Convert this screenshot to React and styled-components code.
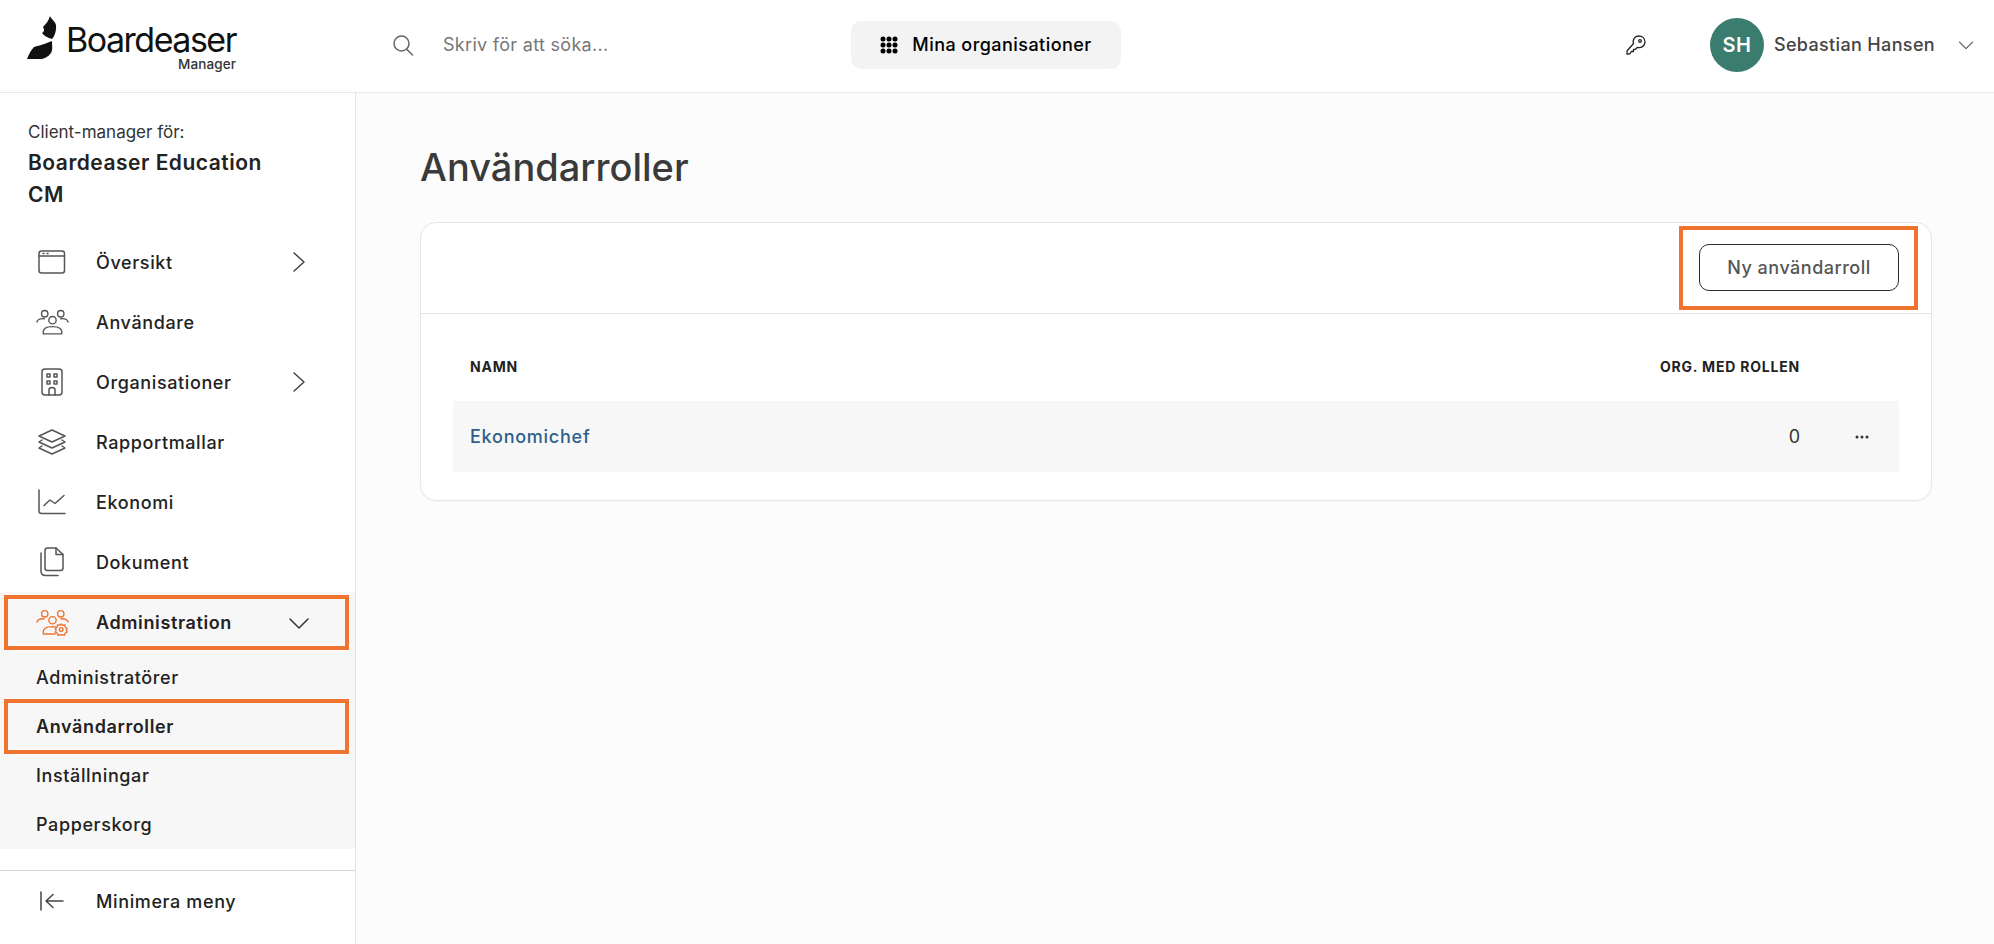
import React from 'react'
import styled, { createGlobalStyle } from 'styled-components'

const Global = createGlobalStyle`
  html, body { margin: 0; padding: 0; background: #fff; }
  body { font-family: Inter, "Liberation Sans", sans-serif; color: #222; }
  * { box-sizing: border-box; }
`

const Page = styled.div`
  width: 1994px;
  height: 944px;
  overflow: hidden;
  display: flex;
  flex-direction: column;
`

const Header = styled.header`
  height: 93px;
  flex: none;
  display: flex;
  align-items: center;
  background: #fff;
  padding-bottom: 3px;
  border-bottom: 1px solid #e9e9e9;
`

const LogoArea = styled.div`
  width: 392px;
  height: 100%;
  flex: none;
  padding: 16px 0 0 27px;
  display: flex;
  align-items: flex-start;
  gap: 9px;
`

const LogoText = styled.div`
  display: flex;
  flex-direction: column;
  align-items: flex-end;
  width: 170px;
  margin-top: 7px;
  font-size: 34px;
  line-height: 34px;
  letter-spacing: -1.5px;
  color: #111;
`

const LogoSub = styled.span`
  font-size: 13.5px;
  line-height: 14px;
  letter-spacing: 0.1px;
  font-weight: 500;
  color: #333;
`

const SearchArea = styled.div`
  width: 459px;
  flex: none;
  display: flex;
  align-items: center;
  gap: 29px;
  font-size: 18px;
  letter-spacing: 0.3px;
  color: #777;
`

const OrgButton = styled.button`
  width: 270px;
  height: 48px;
  flex: none;
  display: flex;
  align-items: center;
  justify-content: center;
  gap: 14px;
  border: 0;
  border-radius: 10px;
  background: #f3f3f3;
  font: 500 18px Inter, sans-serif;
  letter-spacing: 0.45px;
  color: #000;
`

const HeaderRight = styled.div`
  margin-left: auto;
  display: flex;
  align-items: center;
  padding-right: 20px;
`

const KeyWrap = styled.div`
  display: flex;
  margin-right: 64px;
`

const Avatar = styled.div`
  width: 54px;
  height: 54px;
  border-radius: 50%;
  background: #3a7c6e;
  color: #fff;
  display: flex;
  align-items: center;
  justify-content: center;
  font-size: 20px;
  font-weight: 600;
  letter-spacing: 0.5px;
  margin-right: 10px;
`

const UserName = styled.div`
  font-size: 18px;
  font-weight: 500;
  color: #444;
  letter-spacing: 0.35px;
  margin-right: 23px;
`

const Body = styled.div`
  flex: 1;
  display: flex;
  min-height: 0;
`

const Sidebar = styled.aside`
  width: 356px;
  flex: none;
  display: flex;
  flex-direction: column;
  background: #fff;
  border-right: 1px solid #e4e4e4;
`

const ClientBlock = styled.div`
  height: 139px;
  flex: none;
  padding: 28px 28px 0;
`

const ClientLabel = styled.div`
  font-size: 17px;
  line-height: 22px;
  color: #333;
  margin-bottom: 4px;
`

const ClientName = styled.div`
  font-size: 21px;
  line-height: 32px;
  font-weight: 600;
  color: #222;
  letter-spacing: 0.5px;
  width: 270px;
`

const NavRow = styled.div`
  position: relative;
  height: ${p => p.$h || 60}px;
  display: flex;
  align-items: center;
  padding-left: 96px;
  font-size: 18px;
  font-weight: ${p => (p.$bold ? 600 : 450)};
  color: #222;
  letter-spacing: 0.62px;
`

const NavIcon = styled.span`
  position: absolute;
  left: 32px;
  top: 50%;
  transform: translateY(-50%);
  width: 40px;
  height: 40px;
  display: flex;
  align-items: center;
  justify-content: center;
`

const Chevron = styled.span`
  position: absolute;
  left: 288px;
  top: 50%;
  transform: translateY(-50%);
  width: 22px;
  height: 22px;
  display: flex;
`

const Highlight = styled.span`
  position: absolute;
  border: 4px solid #ee7430;
  pointer-events: none;
  left: ${p => p.$l}px;
  right: ${p => p.$r}px;
  top: ${p => p.$t}px;
  bottom: ${p => p.$b}px;
`

const SubNav = styled.div`
  background: #f7f7f7;
  height: 257px;
  flex: none;
`

const SubItem = styled.div`
  position: relative;
  height: 49px;
  display: flex;
  align-items: center;
  padding-left: 36px;
  font-size: 18px;
  font-weight: ${p => (p.$bold ? 600 : 450)};
  color: #222;
  letter-spacing: 0.62px;
`

const SideFooter = styled.div`
  margin-top: 21px;
  border-top: 1px solid #d6d6d6;
`

const Main = styled.main`
  flex: 1;
  background: #fcfcfc;
  padding: 51px 62px 0 64px;
`

const Title = styled.h1`
  margin: 0 0 32px;
  font-size: 38px;
  line-height: 46px;
  font-weight: 500;
  color: #3a3a3a;
`

const Card = styled.section`
  height: 279px;
  background: #fff;
  border: 1px solid #e6e6e6;
  border-radius: 16px;
  box-shadow: 0 1px 2px rgba(0, 0, 0, 0.03);
`

const CardTop = styled.div`
  height: 91px;
  display: flex;
  align-items: center;
  justify-content: flex-end;
  padding: 0 32px 1px 0;
  border-bottom: 1px solid #e6e6e6;
`

const ButtonWrap = styled.div`
  position: relative;
`

const NewButton = styled.button`
  width: 200px;
  height: 47px;
  display: block;
  border: 1px solid #2b2b2b;
  border-radius: 10px;
  background: #fff;
  font: 500 18px Inter, sans-serif;
  color: #555;
  letter-spacing: 0.5px;
`

const TableWrap = styled.div`
  padding: 0 32px;
`

const TableHead = styled.div`
  height: 87px;
  display: flex;
  align-items: center;
  justify-content: space-between;
  padding: 18px 99px 0 17px;
  font-size: 14px;
  font-weight: 700;
  color: #222;
  letter-spacing: 0.8px;
`

const TableRow = styled.div`
  height: 71px;
  display: flex;
  align-items: center;
  background: #f7f7f7;
  padding-left: 17px;
  font-size: 18px;
`

const RoleLink = styled.a`
  color: #2d5f8d;
  font-weight: 500;
  letter-spacing: 0.75px;
  flex: 1;
`

const Count = styled.span`
  color: #333;
`

const More = styled.span`
  display: flex;
  margin: 0 30px 0 55px;
`

const stroke = { fill: 'none', stroke: '#555', strokeWidth: 1.5, strokeLinecap: 'round', strokeLinejoin: 'round' }
const orange = { ...stroke, stroke: '#ee7430' }

const LogoMark = () => (
  <svg width="30" height="44" viewBox="27 16 30 44">
    <path fill="#111" d="M50 16C51 19 55 21 56 25C56.500 30 55 36 52 39C48 38 44 36 42 33C45 31 44 29 43 27C46 24 49 20 50 16Z" />
    <path fill="#111" d="M52 41C52 46 53 50 51 53C48 57 44 59 40 59L27 59C29 54 31 50 34 47C38 46 45 44 52 41Z" />
  </svg>
)

const SearchIcon = () => (
  <svg width="22" height="22" viewBox="0 0 22 22" {...stroke} stroke="#666">
    <circle cx="9.500" cy="9.500" r="7.500" />
    <path d="M15 15.500L20.500 21" />
  </svg>
)

const GridIcon = () => (
  <svg width="18" height="18" viewBox="0 0 18 18" fill="#000">
    {[3, 9, 15].flatMap(y => [3, 9, 15].map(x => <circle key={`${x}-${y}`} cx={x} cy={y} r="2.500" />))}
  </svg>
)

const KeyIcon = () => (
  <svg width="20" height="20" viewBox="0 0 20 20" {...stroke} stroke="#222" strokeWidth="1.3">
    <path d="M7.500 8.500C6.300 5 8.700 1 12.500 1C16.500 1 19 3.600 19 7C19 11 15 13.500 11.500 12.300L9.500 14.300L7.500 14.300L7.500 16.500L5.300 16.500L3.800 18.800L1 19L1 16Z" />
    <circle cx="14" cy="6" r="1.300" />
  </svg>
)

const WindowIcon = () => (
  <svg width="28" height="26" viewBox="0 0 28 26" {...stroke}>
    <rect x="1" y="2" width="25.500" height="22" rx="2.500" />
    <path d="M1 7H26.500M5 4.500H6M9 4.500H10" />
  </svg>
)

const UsersIcon = () => (
  <svg width="33" height="28" viewBox="0 0 36 30" {...stroke}>
    <circle cx="9.500" cy="6" r="3.500" />
    <circle cx="27" cy="6" r="3.500" />
    <circle cx="18" cy="13" r="4" />
    <path d="M1 15C2 12 5 11 9 11.500M35 15C34 12 31 11 27 11.500" />
    <path d="M8 28C7 22 11 20 18 20C25 20 29 22 28 28Z" />
  </svg>
)

const BuildingIcon = () => (
  <svg width="22" height="28" viewBox="0 0 22 28" {...stroke}>
    <rect x="1" y="1" width="20" height="26" rx="3" />
    <rect x="6" y="6" width="3" height="3" />
    <rect x="13" y="6" width="3" height="3" />
    <rect x="6" y="13" width="3" height="3" />
    <rect x="13" y="13" width="3" height="3" />
    <path d="M8 27V22C8 20 9.500 19.500 11 19.500C12.500 19.500 14 20 14 22V27" />
  </svg>
)

const LayersIcon = () => (
  <svg width="28" height="28" viewBox="0 0 28 28" {...stroke}>
    <path d="M14 2L27 8L14 14L1 8Z" />
    <path d="M4 12L1 14L14 20L27 14L24 12" />
    <path d="M4 18L1 20L14 26L27 20L24 18" />
  </svg>
)

const ChartIcon = () => (
  <svg width="28" height="26" viewBox="0 0 28 26" {...stroke}>
    <path d="M1 1V22C1 23.500 2 24.500 3.500 24.500H27" />
    <path d="M6 16.500L12 11L17 14.500L26 6.500" />
  </svg>
)

const DocsIcon = () => (
  <svg width="26" height="30" viewBox="0 0 26 30" {...stroke}>
    <path d="M6 3.500C6 2 7 1 8.500 1H17L24 7.500V21C24 22.500 23 23.500 21.500 23.500H8.500C7 23.500 6 22.500 6 21Z" />
    <path d="M17 1V7.500H24" />
    <path d="M2 6V24C2 27 3.500 28.500 6.500 28.500H19" />
  </svg>
)

const AdminIcon = () => (
  <svg width="33" height="28" viewBox="0 0 36 30" {...orange}>
    <circle cx="9.500" cy="5" r="3.500" />
    <circle cx="27" cy="5" r="3.500" />
    <circle cx="18" cy="12" r="4" />
    <path d="M1 14C2 11 5 10 9 10.500M35 14C34 11 31 10 27 10.500" />
    <path d="M8 27C7 21 11 19 18 19L21 19.300M8 27H21" />
    <circle cx="27.500" cy="22" r="2" />
    <path d="M27.500 16L29 17.500L31.500 17L32 19.500L34 21L33 23L34 25L31.800 26L31 28.500L28.500 27.800H26.500L24 28.500L23.200 26L21 25L22 23L21 21L23 19.500L23.500 17L26 17.500Z" />
  </svg>
)

const CollapseIcon = () => (
  <svg width="24" height="20" viewBox="0 0 24 20" {...stroke} stroke="#444">
    <path d="M1 1V19M23 10H7M13 3.500L6 10L13 16.500" />
  </svg>
)

const ChevronRight = () => (
  <svg width="22" height="22" viewBox="0 0 22 22" {...stroke} stroke="#444">
    <path d="M6 2L16 11L6 20" />
  </svg>
)

const ChevronDown = ({ color = '#333', size = 22 }) => (
  <svg width={size} height={size} viewBox="0 0 22 22" {...stroke} stroke={color}>
    <path d="M2 7L11 16L20 7" />
  </svg>
)

const Dots = () => (
  <svg width="14" height="4" viewBox="0 0 14 4" fill="#333">
    <circle cx="2" cy="2" r="1.500" />
    <circle cx="7" cy="2" r="1.500" />
    <circle cx="12" cy="2" r="1.500" />
  </svg>
)

const navItems = [
  { label: 'Översikt', icon: <WindowIcon />, arrow: true },
  { label: 'Användare', icon: <UsersIcon /> },
  { label: 'Organisationer', icon: <BuildingIcon />, arrow: true },
  { label: 'Rapportmallar', icon: <LayersIcon /> },
  { label: 'Ekonomi', icon: <ChartIcon /> },
  { label: 'Dokument', icon: <DocsIcon /> },
]

export default function App() {
  return (
    <Page>
      <Global />
      <Header>
        <LogoArea>
          <LogoMark />
          <LogoText>
            Boardeaser
            <LogoSub>Manager</LogoSub>
          </LogoText>
        </LogoArea>
        <SearchArea>
          <SearchIcon />
          Skriv för att söka...
        </SearchArea>
        <OrgButton>
          <GridIcon />
          Mina organisationer
        </OrgButton>
        <HeaderRight>
          <KeyWrap><KeyIcon /></KeyWrap>
          <Avatar>SH</Avatar>
          <UserName>Sebastian Hansen</UserName>
          <ChevronDown color="#555" size={16} />
        </HeaderRight>
      </Header>
      <Body>
        <Sidebar>
          <ClientBlock>
            <ClientLabel>Client-manager för:</ClientLabel>
            <ClientName>Boardeaser Education CM</ClientName>
          </ClientBlock>
          {navItems.map(item => (
            <NavRow key={item.label}>
              <NavIcon>{item.icon}</NavIcon>
              {item.label}
              {item.arrow && <Chevron><ChevronRight /></Chevron>}
            </NavRow>
          ))}
          <SubNav>
            <NavRow $h={61} $bold>
              <NavIcon><AdminIcon /></NavIcon>
              Administration
              <Chevron><ChevronDown /></Chevron>
              <Highlight $l={4} $r={6} $t={3} $b={3} />
            </NavRow>
            <SubItem>Administratörer</SubItem>
            <SubItem $bold>
              Användarroller
              <Highlight $l={4} $r={6} $t={-3} $b={-3} />
            </SubItem>
            <SubItem>Inställningar</SubItem>
            <SubItem>Papperskorg</SubItem>
          </SubNav>
          <SideFooter>
            <NavRow>
              <NavIcon><CollapseIcon /></NavIcon>
              Minimera meny
            </NavRow>
          </SideFooter>
        </Sidebar>
        <Main>
          <Title>Användarroller</Title>
          <Card>
            <CardTop>
              <ButtonWrap>
                <NewButton>Ny användarroll</NewButton>
                <Highlight $l={-20} $r={-19} $t={-18} $b={-19} />
              </ButtonWrap>
            </CardTop>
            <TableWrap>
              <TableHead>
                <span>NAMN</span>
                <span>ORG. MED ROLLEN</span>
              </TableHead>
              <TableRow>
                <RoleLink>Ekonomichef</RoleLink>
                <Count>0</Count>
                <More><Dots /></More>
              </TableRow>
            </TableWrap>
          </Card>
        </Main>
      </Body>
    </Page>
  )
}
